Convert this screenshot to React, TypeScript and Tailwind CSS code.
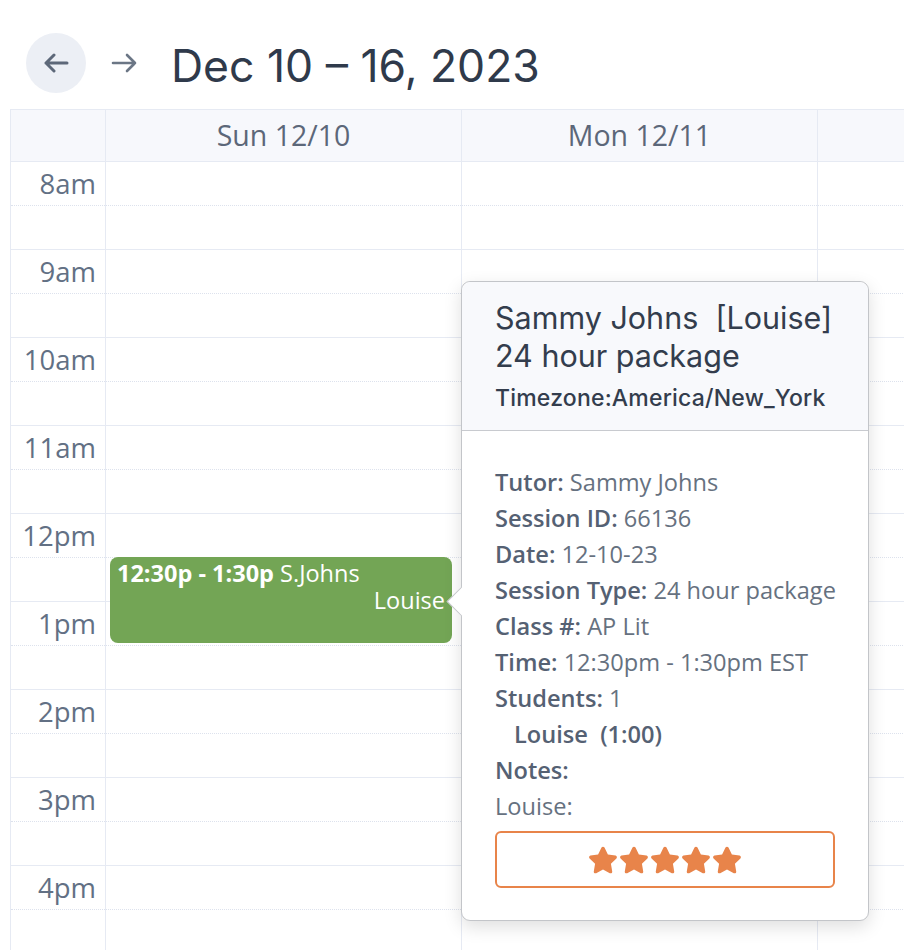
import React from 'react';
import { FaStar } from 'react-icons/fa';

const hours = ['8am', '9am', '10am', '11am', '12pm', '1pm', '2pm', '3pm', '4pm', ''];
const days = ['Sun 12/10', 'Mon 12/11', ''];

const details: [string, string][] = [
  ['Tutor:', 'Sammy Johns'],
  ['Session ID:', '66136'],
  ['Date:', '12-10-23'],
  ['Session Type:', '24 hour package'],
  ['Class #:', 'AP Lit'],
  ['Time:', '12:30pm - 1:30pm EST'],
  ['Students:', '1'],
];

function ArrowIcon({ dir, className }: { dir: 'left' | 'right'; className?: string }) {
  return (
    <svg width="27" height="20" viewBox="0 0 27 20" fill="none" className={className}>
      {dir === 'left' ? (
        <path d="M24 10H3M11 2L3 10l8 8" stroke="currentColor" strokeWidth="3" strokeLinecap="round" strokeLinejoin="round" />
      ) : (
        <path d="M2 10h22M16 2l8 8-8 8" stroke="currentColor" strokeWidth="2.6" strokeLinecap="round" strokeLinejoin="round" />
      )}
    </svg>
  );
}

function HourCell({ label }: { label?: string }) {
  return (
    <div className="flex flex-col">
      <div className="h-[44px] border-b border-dotted border-[#dde2ed] flex items-center justify-end pr-[9px] text-[27.5px] text-[#627084]">
        {label}
      </div>
      <div className="h-[44px] border-b border-[#e6eaf3]" />
    </div>
  );
}

function SessionPopover() {
  return (
    <div className="absolute left-[461px] top-[281px] w-[408px] h-[640px] rounded-[9px] border border-[#c3c5c9] bg-white shadow-[0_6px_18px_rgba(0,0,0,0.13)]">
      {/* pointer toward the event block */}
      <div className="absolute left-[-11px] top-[309px] w-[21px] h-[21px] rotate-45 bg-white border-l border-b border-[#c3c5c9]" />

      <div className="rounded-t-[9px] bg-[#f8f9fc] border-b border-[#c8cacf] pl-[33px] pt-[17px] pb-[17px] font-['Inter',sans-serif] text-[#333d4d]">
        <div className="text-[30.5px] leading-[38px] whitespace-pre">Sammy Johns  [Louise]</div>
        <div className="text-[30.5px] leading-[38px]">24 hour package</div>
        <div className="mt-[8px] text-[23px] leading-[30px] font-medium tracking-[0.2px]">Timezone:America/New_York</div>
      </div>

      <div className="pl-[33px] pr-[30px] pt-[33px] font-['Open_Sans',sans-serif] text-[23.6px] leading-[36px] text-[#66717f]">
        {details.map(([k, v]) => (
          <div key={k} className="whitespace-nowrap">
            <span className="font-semibold text-[#556173]">{k}</span> {v}
          </div>
        ))}
        <div className="pl-[19px] font-semibold text-[#556173] whitespace-pre">Louise  (1:00)</div>
        <div className="font-semibold text-[#556173]">Notes:</div>
        <div>Louise:</div>
        <div className="mt-[7px] mr-[3px] h-[57px] rounded-[6px] border-2 border-[#e8844a] flex items-center justify-center gap-[1px] text-[#e8844a]">
          {[0, 1, 2, 3, 4].map((i) => (
            <FaStar key={i} size={30} />
          ))}
        </div>
      </div>
    </div>
  );
}

export default function App() {
  return (
    <div className="relative w-[904px] h-[950px] overflow-hidden bg-white font-['Open_Sans',sans-serif]">
      {/* week navigation */}
      <div className="flex items-center pl-[26px] pt-[33px] h-[93px]">
        <button className="w-[60px] h-[60px] rounded-full bg-[#eceff5] flex items-center justify-center text-[#5d6879]">
          <ArrowIcon dir="left" />
        </button>
        <button className="ml-[25px] text-[#6b7685]">
          <ArrowIcon dir="right" />
        </button>
        <h1 className="ml-[33px] pt-[6px] font-['Inter',sans-serif] text-[44.5px] leading-none text-[#2f3a4b]">
          Dec 10 – 16, 2023
        </h1>
      </div>

      {/* week grid */}
      <div className="mt-[16px] ml-[10px] w-[1200px] border-l border-t border-[#e6eaf3]">
        <div className="flex h-[52px] bg-[#f7f8fc] border-b border-[#e6eaf3]">
          <div className="w-[95px] shrink-0 border-r border-[#e6eaf3]" />
          {days.map((d, di) => (
            <div
              key={di}
              className="w-[356px] shrink-0 border-r border-[#e6eaf3] flex items-center justify-center text-[28.5px] text-[#5c6779]"
            >
              {d}
            </div>
          ))}
        </div>

        <div className="flex">
          <div className="w-[95px] shrink-0 border-r border-[#e6eaf3]">
            {hours.map((h, hi) => (
              <HourCell key={hi} label={h} />
            ))}
          </div>
          {days.map((d, di) => (
            <div key={di} className="relative w-[356px] shrink-0 border-r border-[#e6eaf3]">
              {hours.map((h, hi) => (
                <HourCell key={hi} />
              ))}
              {di === 0 && (
                <div className="absolute left-[4px] right-[9px] top-[395px] h-[86px] rounded-[8px] bg-[#73a555] px-[7px] pt-[3px] text-white text-[23.5px] leading-[27px]">
                  <div className="whitespace-nowrap">
                    <span className="font-bold">12:30p - 1:30p</span> S.Johns
                  </div>
                  <div className="text-right">Louise</div>
                </div>
              )}
            </div>
          ))}
        </div>
      </div>

      <SessionPopover />
    </div>
  );
}
